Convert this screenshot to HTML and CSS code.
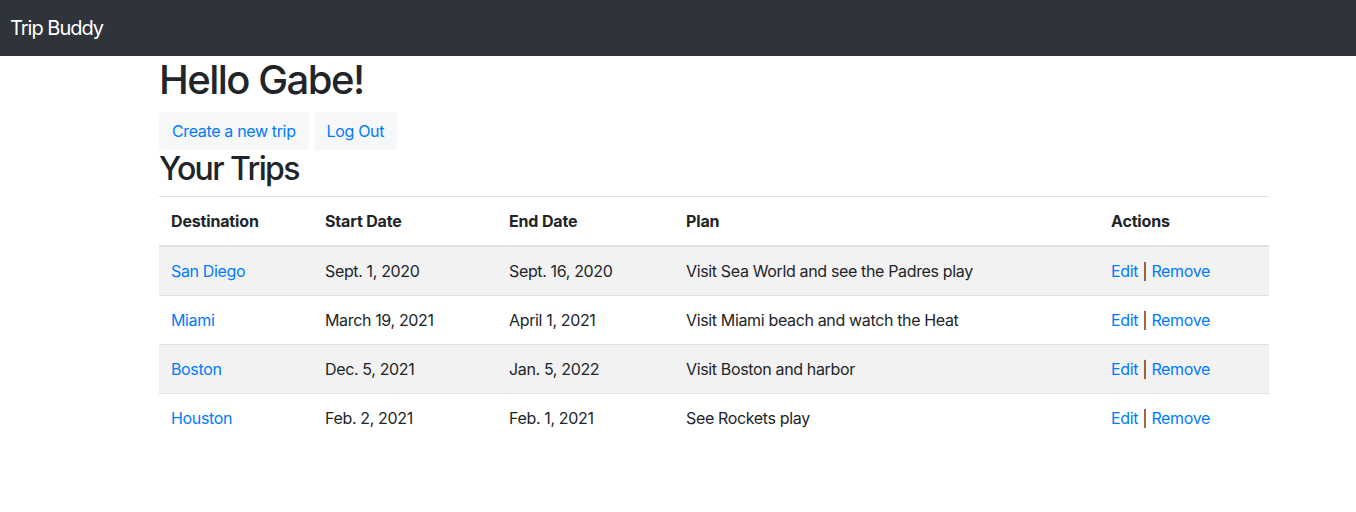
FILE: index.html
```html
<!DOCTYPE html>
<html lang="en">
<head>
<meta charset="utf-8">
<title>Trip Buddy</title>
<link rel="stylesheet" href="styles.css">
</head>
<body>
<nav class="navbar">
  <a class="brand" href="#">Trip Buddy</a>
</nav>
<main class="container">
  <h1 class="title">Hello Gabe!</h1>
  <div class="actions-bar">
    <a class="btn" href="#">Create a new trip</a>
    <a class="btn" href="#">Log Out</a>
  </div>
  <h2 class="subtitle">Your Trips</h2>
  <table class="trips">
    <colgroup>
      <col class="c1"><col class="c2"><col class="c3"><col class="c4"><col class="c5">
    </colgroup>
    <thead>
      <tr><th>Destination</th><th>Start Date</th><th>End Date</th><th>Plan</th><th>Actions</th></tr>
    </thead>
    <tbody>
      <tr><td><a href="#">San Diego</a></td><td>Sept. 1, 2020</td><td>Sept. 16, 2020</td><td>Visit Sea World and see the Padres play</td><td><a href="#">Edit</a> | <a href="#">Remove</a></td></tr>
      <tr><td><a href="#">Miami</a></td><td>March 19, 2021</td><td>April 1, 2021</td><td>Visit Miami beach and watch the Heat</td><td><a href="#">Edit</a> | <a href="#">Remove</a></td></tr>
      <tr><td><a href="#">Boston</a></td><td>Dec. 5, 2021</td><td>Jan. 5, 2022</td><td>Visit Boston and harbor</td><td><a href="#">Edit</a> | <a href="#">Remove</a></td></tr>
      <tr><td><a href="#">Houston</a></td><td>Feb. 2, 2021</td><td>Feb. 1, 2021</td><td>See Rockets play</td><td><a href="#">Edit</a> | <a href="#">Remove</a></td></tr>
    </tbody>
  </table>
</main>
</body>
</html>
```
FILE: styles.css
```css
* { box-sizing: border-box; }
body {
  margin: 0;
  font-family: Inter, "Noto Sans", sans-serif;
  font-size: 16px;
  line-height: 1.5;
  letter-spacing: -0.022em;
  color: #212529;
  background: #fff;
}
a { color: #007bff; text-decoration: none; }
.navbar {
  height: 56px;
  background: #2f333a;
  display: flex;
  align-items: center;
  padding: 0 10px;
}
.brand {
  color: #fff;
  font-size: 20px;
  line-height: 30px;
  letter-spacing: -0.05em;
}
.container {
  margin: 0 87px 0 159px;
}
.title {
  margin: 0 0 8px;
  font-size: 40px;
  font-weight: 500;
  line-height: 48px;
  letter-spacing: -0.038em;
}
.actions-bar {
  display: flex;
  gap: 5px;
}
.btn {
  display: inline-block;
  padding: 6px 12px;
  border: 1px solid transparent;
  line-height: 24px;
  background: #f6f7f9;
  border-radius: 4px;
}
.subtitle {
  margin: 0 0 8px;
  font-size: 32px;
  font-weight: 500;
  line-height: 38px;
  letter-spacing: -0.05em;
}
.trips {
  width: 100%;
  border-collapse: collapse;
  table-layout: fixed;
}
.c1 { width: 154px; }
.c2 { width: 184px; }
.c3 { width: 177px; }
.c4 { width: 425px; }
.c5 { width: 170px; }
.trips th, .trips td {
  padding: 12px;
  text-align: left;
  vertical-align: top;
  border-top: 1px solid #dee2e6;
}
.trips th {
  font-weight: 700;
  letter-spacing: -0.01em;
  border-bottom: 2px solid #dee2e6;
}
.trips tbody tr:nth-child(odd) { background: #f2f2f2; }
.trips tbody tr:first-child td { border-top: 0; }
```
